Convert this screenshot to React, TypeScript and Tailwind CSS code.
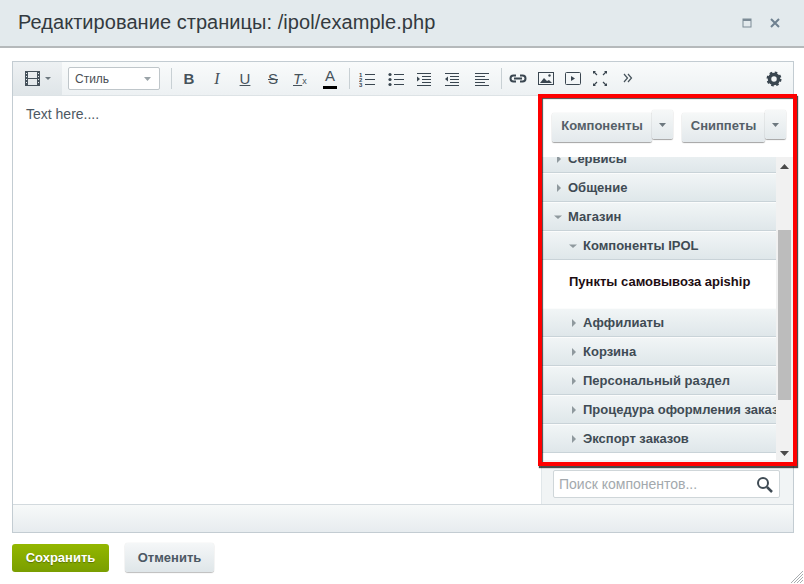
const Sep = () => <div className="w-px h-[21px] bg-[#c8d0d4]" />;

const Tri = ({ open, x }: { open?: boolean; x: number }) => (
  <svg width="8" height="8" viewBox="0 0 8 8" className="shrink-0" style={{ marginLeft: x }}>
    {open ? <path d="M0 2.5h8L4 6z" fill="#8f999e" /> : <path d="M2 0v8l4-4z" fill="#8f999e" />}
  </svg>
);

const Row = ({ label, pad, open, indent }: { label: string; pad: number; open?: boolean; indent: number }) => (
  <div className="h-[29px] shrink-0 flex items-center bg-gradient-to-b from-[#f1f5f6] to-[#dfe7ea] border-b border-[#c9d3d8] border-t border-t-[#fbfcfc] whitespace-nowrap overflow-hidden">
    <Tri open={open} x={pad} />
    <span className="font-bold text-[13px] text-[#3f4b54]" style={{ marginLeft: indent }}>{label}</span>
  </div>
);

const SplitBtn = ({ label, w }: { label: string; w: number }) => (
  <div className="flex items-start">
    <div className="h-[29px] flex items-center justify-center pb-[3px] rounded-[2px] bg-gradient-to-b from-[#f6f8f8] to-[#e3e9ec] shadow-[0_1px_1px_rgba(0,0,0,0.35),0_0_1px_rgba(0,0,0,0.2)] font-bold text-[13px] text-[#555f68] mt-[3px]" style={{ width: w }}>
      {label}
    </div>
    <div className="h-[29px] w-[21px] flex items-center justify-center rounded-[2px] bg-gradient-to-b from-[#f6f8f8] to-[#e3e9ec] shadow-[0_1px_1px_rgba(0,0,0,0.35),0_0_1px_rgba(0,0,0,0.2)]">
      <svg width="7" height="4" viewBox="0 0 7 4"><path d="M0 0h7L3.5 4z" fill="#6d787f" /></svg>
    </div>
  </div>
);

const Ico = ({ children, w = 16, ml = 0 }: { children: React.ReactNode; w?: number; ml?: number }) => (
  <svg width={w} height="16" viewBox={`0 0 ${w} 16`} className="shrink-0" style={{ marginLeft: ml }}>{children}</svg>
);

const lines = (ys: number[], x1: number, x2: number, c = "#3a4650") =>
  ys.map((y) => <rect key={y} x={x1} y={y} width={x2 - x1} height="1" fill={c} />);

const T = ({ c, cls, ml }: { c: string; cls: string; ml: number }) => (
  <span className={`w-[16px] text-center text-[15px] leading-none text-[#46525b] shrink-0 ${cls}`} style={{ marginLeft: ml }}>{c}</span>
);

export default function App() {
  return (
    <div className="relative w-[804px] h-[584px] bg-white overflow-hidden font-['Liberation_Sans',Arial,sans-serif]">
      <div className="h-[48px] bg-[#e3eaed] border-b-2 border-[#b5b9bb] flex items-center pl-[18px] pr-[24px]">
        <div className="text-[20px] text-[#333a40] pb-[2px] tracking-[0.05px]">Редактирование страницы: /ipol/example.php</div>
        <svg width="10" height="10" viewBox="0 0 10 10" className="ml-auto mr-[18px]"><rect x="1" y="1" width="8" height="8" fill="none" stroke="#7c8b96" strokeWidth="1" /><rect x="1" y="1" width="8" height="2" fill="#7c8b96" /></svg>
        <svg width="10" height="10" viewBox="0 0 10 10"><path d="M1 1l8 8M9 1l-8 8" stroke="#6f8190" strokeWidth="2" /></svg>
      </div>

      <div className="mt-[13px] mx-[12px] w-[782px] h-[472px] border border-[#c3ccd2] flex flex-col">
        <div className="h-[34px] shrink-0 flex items-center bg-gradient-to-b from-[#f9fbfb] to-[#edf1f3] border-b border-[#dde3e6]">
          <div className="w-[49px] h-full bg-gradient-to-b from-[#eef1f3] to-[#dfe5e8] flex items-center pl-[12px] shrink-0">
            <svg width="15" height="15" viewBox="0 0 15 15"><rect x="0.5" y="0.5" width="14" height="14" rx="1" fill="none" stroke="#46525b" /><rect x="0" y="0" width="3" height="15" fill="#46525b" /><rect x="12" y="0" width="3" height="15" fill="#46525b" /><rect x="3" y="7" width="9" height="1" fill="#46525b" /><path d="M1 2.5h1M1 5.5h1M1 8.5h1M1 11.5h1M13 2.5h1M13 5.5h1M13 8.5h1M13 11.5h1" stroke="#e8ecee" /></svg>
            <svg width="6" height="3" viewBox="0 0 6 3" className="ml-[5px]"><path d="M0 0h6L3 3z" fill="#6d787f" /></svg>
          </div>
          <div className="ml-[6px] w-[92px] h-[23px] bg-white border border-[#bfc6ca] rounded-[2px] flex items-center pl-[6px] pr-[8px] text-[12px] text-[#4a4f55] shrink-0">
            Стиль
            <svg width="7" height="4" viewBox="0 0 7 4" className="ml-auto"><path d="M0 0h7L3.5 4z" fill="#9aa3a8" /></svg>
          </div>
          <div className="ml-[11px]"><Sep /></div>
          <T c="B" cls="font-bold" ml={9} />
          <T c="I" cls="italic font-['Liberation_Serif'] text-[16px]" ml={12} />
          <T c="U" cls="underline" ml={12} />
          <T c="S" cls="line-through" ml={12} />
          <span className="w-[16px] ml-[12px] flex items-end text-[#46525b] leading-none shrink-0">
            <span className="italic text-[15px] underline">T</span>
            <span className="text-[9px]">x</span>
          </span>
          <span className="w-[14px] ml-[14px] text-center text-[15px] leading-none text-[#46525b] shrink-0 pb-[3px] border-b-[3px] border-black">A</span>
          <div className="ml-[12px]"><Sep /></div>
          <Ico ml={9}>{lines([3, 8, 13], 6, 16)}<text x="0" y="6" fontSize="6" fontWeight="bold" fill="#3a4650">1</text><text x="0" y="11" fontSize="6" fontWeight="bold" fill="#3a4650">2</text><text x="0" y="16" fontSize="6" fontWeight="bold" fill="#3a4650">3</text></Ico>
          <Ico ml={13}>{lines([3, 8, 13], 6, 16)}<circle cx="2" cy="3.5" r="1.6" fill="#3a4650" /><circle cx="2" cy="8.5" r="1.6" fill="#3a4650" /><circle cx="2" cy="13.5" r="1.6" fill="#3a4650" /></Ico>
          <Ico ml={13}>{lines([2, 14], 0, 14)}{lines([5, 8, 11], 5, 14)}<path d="M0 5.5v5l3-2.5z" fill="#3a4650" /></Ico>
          <Ico ml={12}>{lines([2, 14], 0, 14)}{lines([5, 8, 11], 5, 14)}<path d="M3 5.5v5L0 8z" fill="#3a4650" /></Ico>
          <Ico ml={14}>{lines([2, 8, 14], 0, 14)}{lines([5, 11], 0, 10)}</Ico>
          <div className="ml-[10px]"><Sep /></div>
          <Ico w={18} ml={7}><path d="M7 4.500H4.500a3 3 0 000 6H7M11 4.500h2.500a3 3 0 010 6H11M5 7.500h8" fill="none" stroke="#3a4650" strokeWidth="2" /></Ico>
          <Ico ml={11}><rect x="0.5" y="1.5" width="15" height="12" fill="none" stroke="#3a4650" /><path d="M2 12l4-5 3 3 2-1 3 3z" fill="#3a4650" /><circle cx="11.5" cy="4.5" r="1.2" fill="#3a4650" /></Ico>
          <Ico ml={11}><rect x="0.5" y="1.5" width="15" height="12" rx="1" fill="none" stroke="#3a4650" /><path d="M6 5v5l4-2.500z" fill="#3a4650" /></Ico>
          <Ico w={14} ml={12}><g stroke="#3a4650" strokeWidth="1.200" fill="#3a4650"><path d="M1 1l3 3M13 1l-3 3M1 14l3-3M13 14l-3-3" /></g><path d="M0 0h3L0 3zM14 0h-3l3 3zM0 15h3l-3-3zM14 15h-3l3-3z" fill="#3a4650" /></Ico>
          <Ico w={10} ml={16}><path d="M1 3l3.500 4L1 11M5 3l3.500 4L5 11" fill="none" stroke="#46525b" strokeWidth="1.200" /></Ico>
          <svg width="16" height="16" viewBox="0 0 16 16" className="ml-auto mr-[11px]"><circle cx="8" cy="8" r="4.500" fill="none" stroke="#3a4650" strokeWidth="3.500" /><circle cx="8" cy="8" r="6.500" fill="none" stroke="#3a4650" strokeWidth="2" strokeDasharray="2.600 2.500" /></svg>
        </div>

        <div className="flex-1 flex min-h-0">
          <div className="flex-1 pl-[13px] pt-[10px] text-[14px] leading-[16px] text-[#4d5862]">Text here....</div>
          <div className="w-[252px] shrink-0 border-l border-[#e1e7ea] bg-white flex flex-col">
            <div className="h-[61px] shrink-0 flex pl-[10px] gap-[9px] pt-[14px]">
              <SplitBtn label="Компоненты" w={100} />
              <SplitBtn label="Сниппеты" w={83} />
            </div>
            <div className="h-[303px] shrink-0 flex">
              <div className="w-[234px] overflow-hidden shrink-0">
                <div className="-mt-[13px] flex flex-col">
                  <Row label="Сервисы" pad={13} indent={5} />
                  <Row label="Общение" pad={13} indent={5} />
                  <Row label="Магазин" pad={12} indent={6} open />
                  <Row label="Компоненты IPOL" pad={27} indent={6} open />
                  <div className="h-[48px] shrink-0 flex items-center pl-[27px] pb-[4px] font-bold text-[13px] text-[#1d0d12]">Пункты самовывоза apiship</div>
                  <Row label="Аффилиаты" pad={28} indent={5} />
                  <Row label="Корзина" pad={28} indent={5} />
                  <Row label="Персональный раздел" pad={28} indent={5} />
                  <Row label="Процедура оформления заказа" pad={28} indent={5} />
                  <Row label="Экспорт заказов" pad={28} indent={5} />
                </div>
              </div>
              <div className="flex-1 bg-[#f1f1f1] relative flex flex-col items-center pr-[1px]">
                <svg width="9" height="5" viewBox="0 0 9 5" className="mt-[7px]"><path d="M0 5h9L4.500 0z" fill="#4a4a4a" /></svg>
                <div className="w-[13px] h-[170px] bg-[#bcbcbc] mt-[61px]" />
                <svg width="9" height="5" viewBox="0 0 9 5" className="mt-auto mb-[4px]"><path d="M0 0h9L4.500 5z" fill="#4a4a4a" /></svg>
              </div>
            </div>
            <div className="flex-1 bg-[#f1f4f5] pl-[11px] pt-[10px]">
              <div className="w-[227px] h-[28px] bg-white border border-[#cfd6d9] rounded-[2px] flex items-center pl-[5px] pr-[6px] text-[14px] text-[#a3a9ad]">
                Поиск компонентов...
                <svg width="17" height="17" viewBox="0 0 17 17" className="ml-auto"><circle cx="7" cy="7" r="5" fill="none" stroke="#3f4b54" strokeWidth="2" /><path d="M11 11l5 5" stroke="#3f4b54" strokeWidth="2.500" /></svg>
              </div>
            </div>
          </div>
        </div>

        <div className="h-[28px] shrink-0 border-t border-[#d3dade] bg-gradient-to-b from-[#f7f9f9] to-[#e7ecef]" />
      </div>

      <div className="flex items-start ml-[12px] mt-[11px] gap-[16px]">
        <div className="w-[97px] h-[28px] rounded-[3px] bg-gradient-to-b from-[#93b700] to-[#7a9e00] flex items-center justify-center font-bold text-[13px] text-white [text-shadow:0_1px_1px_rgba(0,0,0,0.3)]">Сохранить</div>
        <div className="w-[89px] h-[29px] -mt-[1px] rounded-[3px] bg-gradient-to-b from-[#f5f7f8] to-[#dfe6e9] shadow-[0_1px_1px_rgba(0,0,0,0.25),0_0_1px_rgba(0,0,0,0.2)] flex items-center justify-center font-bold text-[13px] text-[#4c5863]">Отменить</div>
      </div>

      <div className="absolute left-[538px] top-[94px] w-[259px] h-[372px] border-[4px] border-[#fe0000] shadow-[1px_2px_1px_rgba(0,0,0,0.7),inset_1px_1px_1px_rgba(0,0,0,0.7)] pointer-events-none" />

      <svg width="14" height="14" viewBox="0 0 14 14" className="absolute right-0 bottom-0"><path d="M1 13L13 1M4 13L13 4M7 13l6-6M10 13l3-3" stroke="#a8adb0" strokeWidth="1" /></svg>
    </div>
  );
}
